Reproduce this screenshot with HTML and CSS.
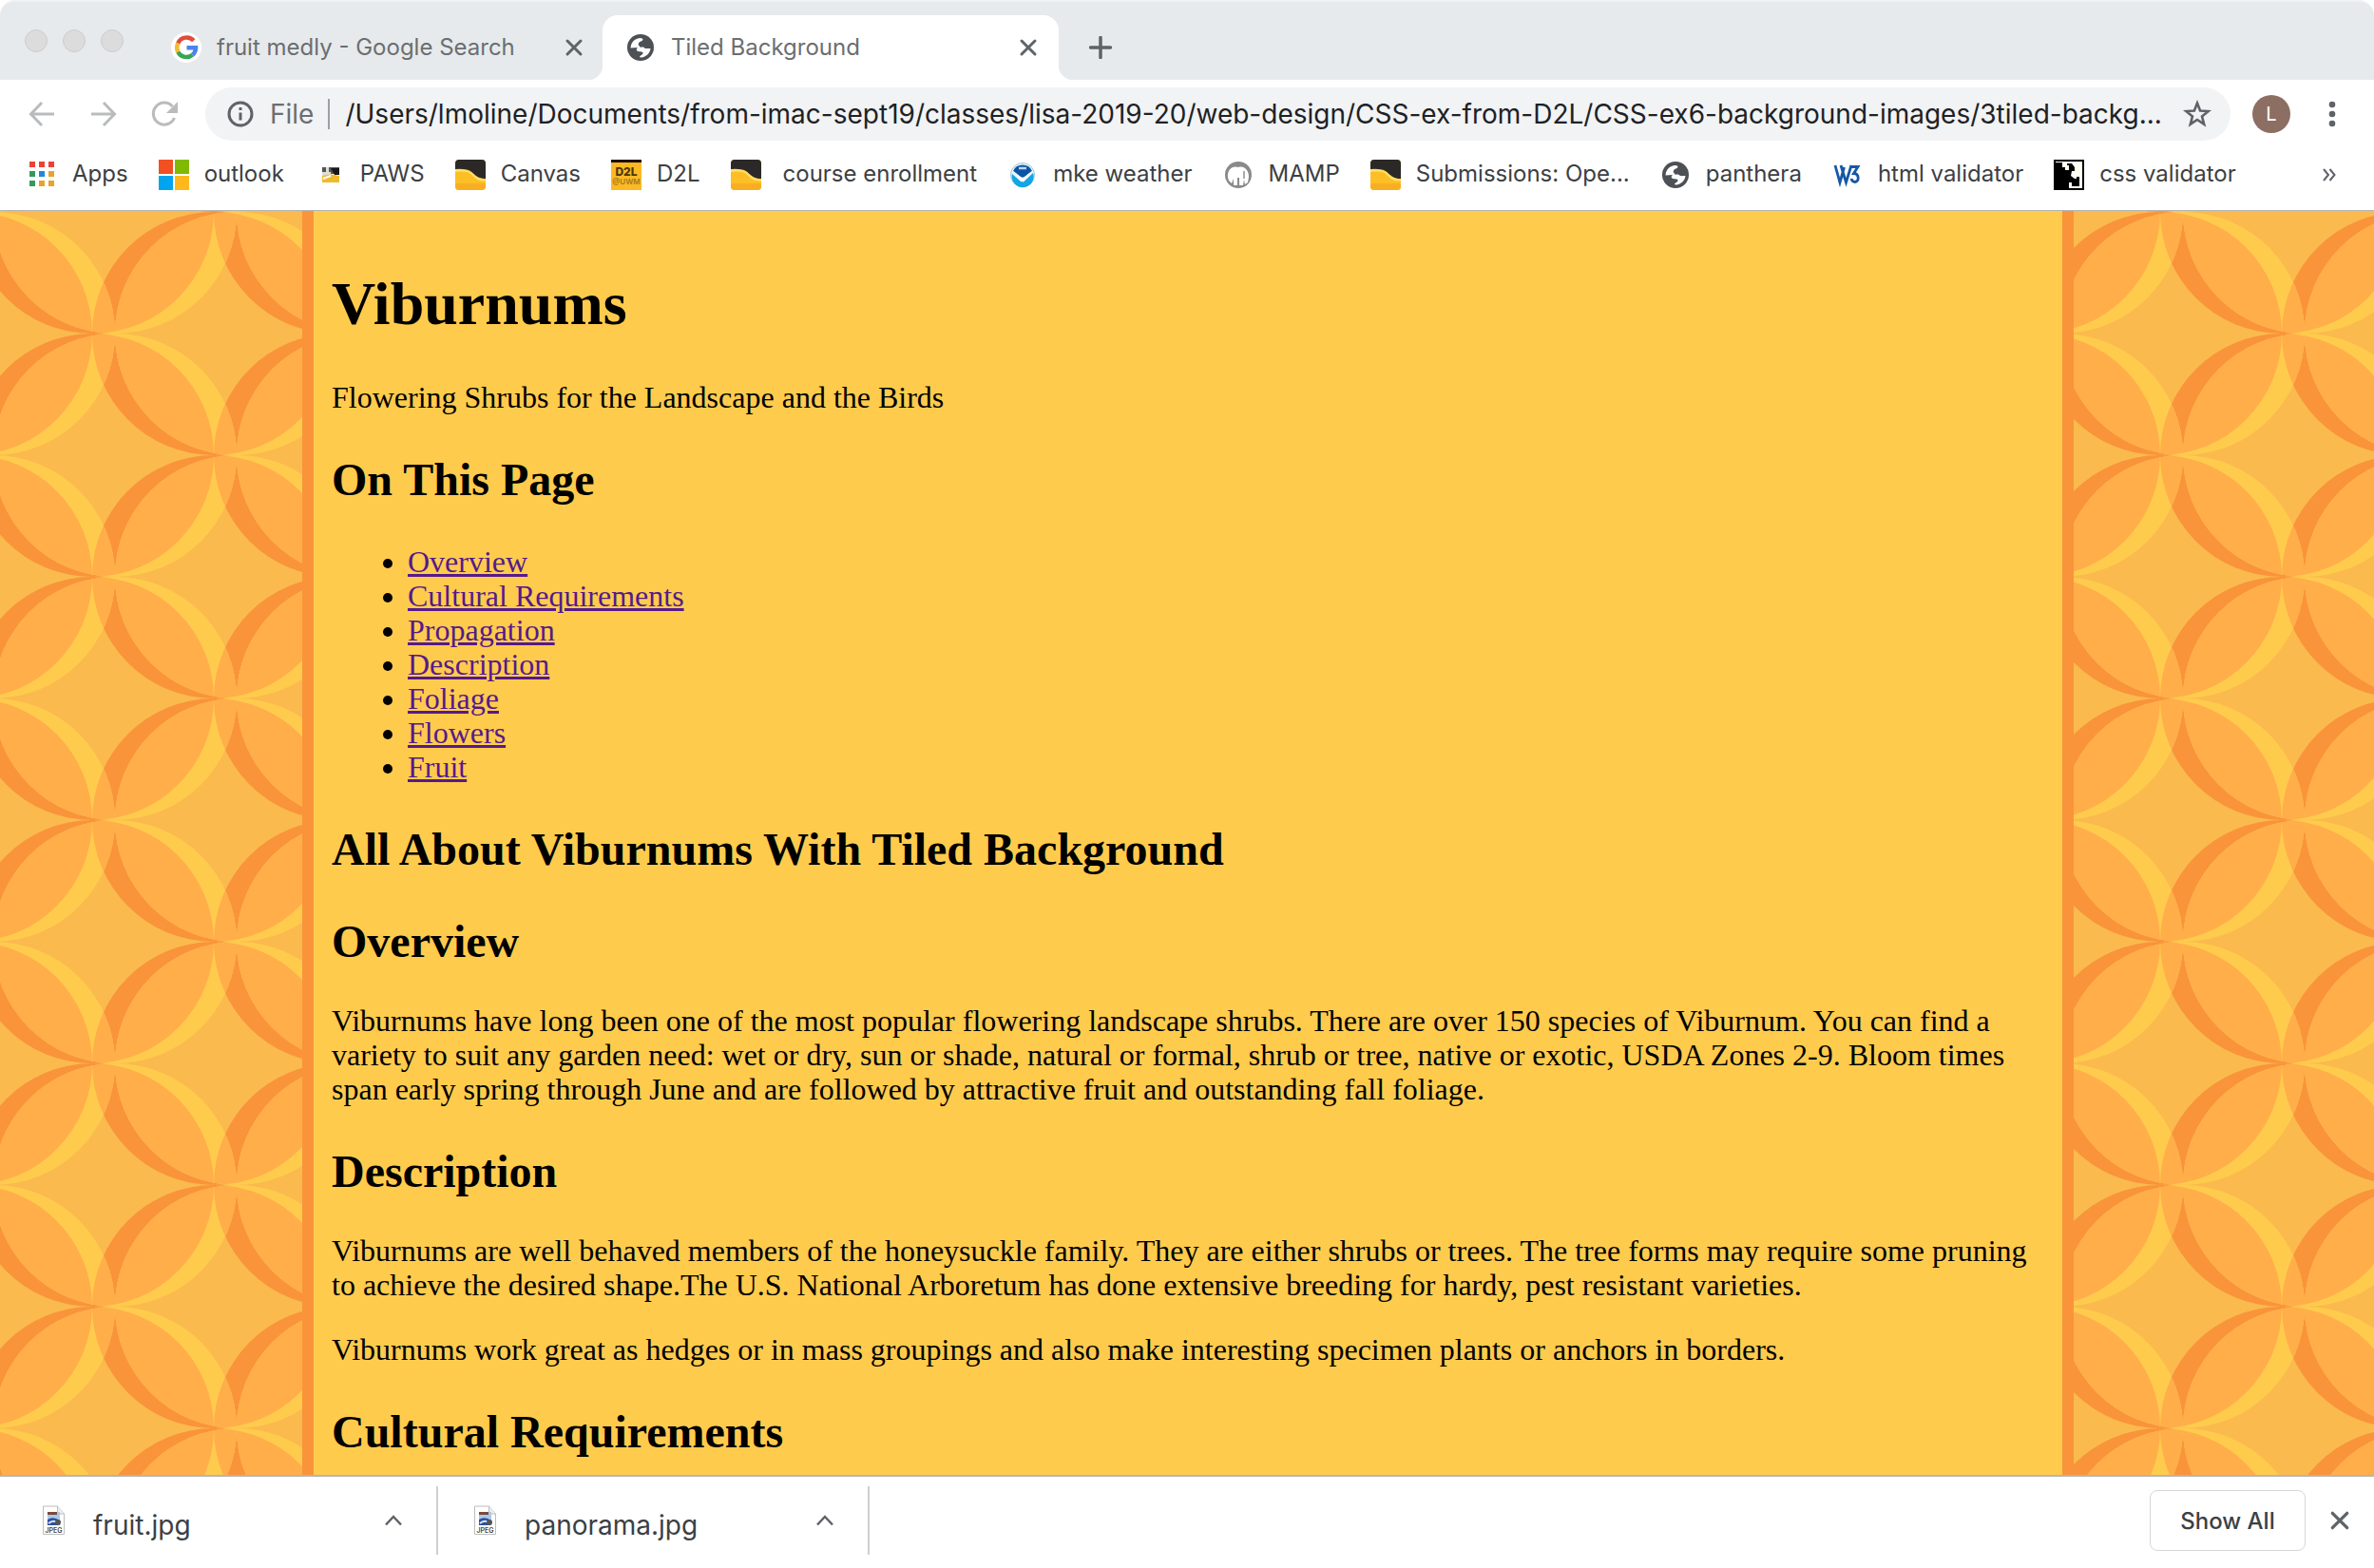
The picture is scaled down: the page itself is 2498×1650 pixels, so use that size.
FILE: index.html
```html
<!DOCTYPE html>
<html lang="en">
<head>
<meta charset="utf-8">
<title>Tiled Background</title>
<link rel="stylesheet" href="styles.css">
</head>
<body>
<svg class="defs" width="0" height="0" aria-hidden="true">
  <defs>
    <symbol id="globe" viewBox="0 0 28 28">
      <circle cx="14" cy="14" r="14" fill="#4d5156"/>
      <path d="M3.500 14.500C4 8 8 4.500 14 4c3 .5 3 2 1.500 3-3.500 1-4 3-3.500 4.500l2 2.500c2-1 4 0 5 1h5.500c-.5 5-4.500 9-10 9.500-1.500 0-2-1-.5-2 3-1.500 3.500-3.500 1-4l-4-.5c-2-1-1.500-3 0-4z" fill="#fff"/>
    </symbol>
    <symbol id="cross" viewBox="0 0 20 20">
      <path d="M3 3l14 14M17 3L3 17" fill="none" stroke="currentColor" stroke-width="3" stroke-linecap="round"/>
    </symbol>
    <symbol id="wave" viewBox="0 0 32 32">
      <rect width="32" height="32" rx="4" fill="#fdbf26"/>
      <path d="M0 25h32v3a4 4 0 0 1-4 4H4a4 4 0 0 1-4-4z" fill="#f9ae22"/>
      <path d="M0 10V4a4 4 0 0 1 4-4h24a4 4 0 0 1 4 4v16c-12 0-12-8-20-9.500Q7 9.500 0 10z" fill="#2b2928"/>
      <path d="M0 10q7-.5 12 1c8 2 8 9 20 9.500v2c-12 1-13-8-20-9.500Q6 12 0 13z" fill="#ffdf6a"/>
    </symbol>
    <symbol id="jpeg" viewBox="0 0 26 32">
      <path d="M1.500 1h15l7 8v21.500h-22z" fill="#fff" stroke="#bdbdbd"/>
      <path d="M16.500 1v8h7" fill="#eee" stroke="#bdbdbd"/>
      <rect x="6" y="7" width="13" height="14" fill="#a9c8ee"/>
      <path d="M6 7h10v3H6z" fill="#7d4a35"/>
      <path d="M6 15q6-4 13 1v5H6z" fill="#2c4f9e"/>
      <path d="M7 19q6-5 12 1" fill="none" stroke="#dde6f5" stroke-width="2"/>
      <circle cx="17" cy="18" r="3" fill="#555"/>
      <text x="12.500" y="29" text-anchor="middle" font-size="7" font-weight="600" font-family="Inter, sans-serif" fill="#444">JPEG</text>
    </symbol>
    <g id="petals">
      <path d="M128 0A128 128 0 0 1 0 128A128 128 0 0 1 128 0z"/>
      <path d="M128 0A128 128 0 0 0 256 128A128 128 0 0 0 128 0z"/>
      <path d="M0 128A128 128 0 0 1 128 256A128 128 0 0 1 0 128z"/>
      <path d="M256 128A128 128 0 0 0 128 256A128 128 0 0 0 256 128z"/>
    </g>
    <clipPath id="petal-clip">
      <path d="M128 0A128 128 0 0 1 0 128A128 128 0 0 1 128 0zM128 0A128 128 0 0 0 256 128A128 128 0 0 0 128 0zM0 128A128 128 0 0 1 128 256A128 128 0 0 1 0 128zM256 128A128 128 0 0 0 128 256A128 128 0 0 0 256 128z"/>
    </clipPath>
    <pattern id="tile" x="-31" y="-127" width="256" height="256" patternUnits="userSpaceOnUse">
      <rect width="256" height="256" fill="#fbba4d"/>
      <use href="#petals" fill="#f9943b"/>
      <g fill="#ffcb4d"><use href="#petals" x="24"/><use href="#petals" x="-232"/></g>
      <g fill="#ffae4a" clip-path="url(#petal-clip)"><use href="#petals" x="24"/><use href="#petals" x="-232"/></g>
    </pattern>
  </defs>
</svg>

<header class="browser">
  <div class="tabstrip">
    <div class="lights"><span></span><span></span><span></span></div>
    <div class="tab">
      <svg class="favicon" viewBox="0 0 32 32" aria-hidden="true">
        <circle cx="16" cy="16" r="16" fill="#fff"/>
        <g fill="none" stroke-width="4.500">
          <path d="M23.800 8.700A10 10 0 0 0 7.300 11.500" stroke="#e14b3c"/>
          <path d="M7.300 11.500a10 10 0 0 0 0 9.200" stroke="#f6bb2a"/>
          <path d="M7.300 20.700A10 10 0 0 0 22.500 23.800" stroke="#36a655"/>
          <path d="M22.500 23.800A10 10 0 0 0 26 16.200H16.500" stroke="#4a83ec"/>
        </g>
      </svg>
      <span class="tab-title">fruit medly - Google Search</span>
      <button class="icon-btn" aria-label="Close tab"><svg width="20" height="20"><use href="#cross"/></svg></button>
    </div>
    <div class="tab active">
      <svg class="favicon globe" aria-hidden="true"><use href="#globe"/></svg>
      <span class="tab-title">Tiled Background</span>
      <button class="icon-btn" aria-label="Close tab"><svg width="20" height="20"><use href="#cross"/></svg></button>
    </div>
    <button class="icon-btn new-tab" aria-label="New tab"><svg width="24" height="24" viewBox="0 0 24 24"><path d="M12 1.500v21M1.500 12h21" stroke="currentColor" stroke-width="3.500" stroke-linecap="round"/></svg></button>
  </div>

  <div class="toolbar">
    <div class="nav">
      <button class="icon-btn" aria-label="Back"><svg width="32" height="32" viewBox="0 0 32 32"><path d="M29 16H5M16 4L4.500 16 16 28" fill="none" stroke="currentColor" stroke-width="3"/></svg></button>
      <button class="icon-btn" aria-label="Forward"><svg width="32" height="32" viewBox="0 0 32 32"><path d="M3 16h24M16 4l11.500 12L16 28" fill="none" stroke="currentColor" stroke-width="3"/></svg></button>
      <button class="icon-btn" aria-label="Reload"><svg width="32" height="32" viewBox="0 0 32 32"><path d="M25.500 20A11.500 11.500 0 1 1 23.500 8" fill="none" stroke="currentColor" stroke-width="3"/><path d="M29 3v12H17z" fill="currentColor"/></svg></button>
    </div>
    <div class="omnibox">
      <svg width="28" height="28" viewBox="0 0 28 28" aria-hidden="true"><circle cx="14" cy="14" r="12" fill="none" stroke="#5f6368" stroke-width="3"/><path d="M14 12.500v8M14 7v3" stroke="#5f6368" stroke-width="3"/></svg>
      <span class="scheme">File</span>
      <input class="url" aria-label="Address" value="/Users/lmoline/Documents/from-imac-sept19/classes/lisa-2019-20/web-design/CSS-ex-from-D2L/CSS-ex6-background-images/3tiled-backg...">
      <button class="icon-btn" aria-label="Bookmark this page"><svg width="30" height="30" viewBox="0 0 30 30"><path d="M15 3.500l3.100 8 8.600.5-6.700 5.400 2.200 8.300L15 21l-7.200 4.700L10 17.400 3.300 12l8.600-.5z" fill="none" stroke="#5f6368" stroke-width="2.600"/></svg></button>
    </div>
    <button class="avatar" aria-label="Profile">L</button>
    <button class="icon-btn menu" aria-label="Menu"><svg width="8" height="28" viewBox="0 0 8 28" fill="#5f6368"><circle cx="4" cy="4" r="3.300"/><circle cx="4" cy="14" r="3.300"/><circle cx="4" cy="24" r="3.300"/></svg></button>
  </div>

  <nav class="bookmarks" aria-label="Bookmarks">
    <a href="#"><svg viewBox="0 0 32 32"><g fill="#ea4335"><path d="M3 2h6v6H3zM13 2h6v6h-6zM23 2h6v6h-6z"/></g><g fill="#349a5c"><path d="M3 12h6v6H3zM3 22h6v6H3z"/></g><path d="M13 12h6v6h-6z" fill="#1e88e5"/><path d="M23 12h6v6h-6zM13 22h6v6h-6zM23 22h6v6h-6z" fill="#e8a32c"/></svg>Apps</a>
    <a href="#"><svg viewBox="0 0 32 32"><path d="M0 0h15v15H0z" fill="#f25022"/><path d="M17 0h15v15H17z" fill="#7fba00"/><path d="M0 17h15v15H0z" fill="#00a4ef"/><path d="M17 17h15v15H17z" fill="#ffb81c"/></svg>outlook</a>
    <a href="#"><svg viewBox="0 0 32 32"><path d="M8 8h18v7H8z" fill="#555"/><path d="M12 8h3v5h-3zM8 13h9v4H8z" fill="#ddd"/><path d="M17 9h9v7h-5z" fill="#171717"/><path d="M8 17q9-3 18 0v7H8z" fill="#f0bb2b"/><path d="M9 20l8-3" stroke="#fff" stroke-width="2"/></svg>PAWS</a>
    <a href="#"><svg><use href="#wave"/></svg>Canvas</a>
    <a href="#"><svg viewBox="0 0 32 32"><path d="M0 0h32v32H0z" fill="#fdb924"/><path d="M0 0h32v3H0z" fill="#1a1200"/><text x="16" y="17" text-anchor="middle" font-size="12" font-weight="800" fill="#4b370b">D2L</text><text x="16" y="26" text-anchor="middle" font-size="8" font-weight="600" fill="#a4781c">@UWM</text></svg>D2L</a>
    <a href="#" class="wide"><svg><use href="#wave"/></svg>course enrollment</a>
    <a href="#"><svg viewBox="0 0 32 32"><circle cx="16" cy="16" r="12.500" fill="#e8f5fc" stroke="#9fc4de"/><path d="M6 12a11 11 0 0 1 20 0l-10 8z" fill="#0b55a5"/><path d="M5 15l9 8 3 .5L27 14A11.500 11.500 0 1 1 5 15z" fill="#14a5e3"/><path d="M5 11l9 10.500q2 1 4 0L27 11l-9 7q-2 1.500-4 0z" fill="#fff"/><path d="M12 9h8" stroke="#b9d4ee" stroke-width="2.500"/></svg>mke weather</a>
    <a href="#"><svg viewBox="0 0 32 32"><circle cx="16" cy="16" r="14" fill="#8a8a8a"/><path d="M5 19C4 10 10 6 16 8c6-2 11 3 11 10l-1 6-3 2-1-5-1 6h-4v-8h-2v8h-4v-7l-2 5-3-3z" fill="#fff"/><path d="M22 12v8" stroke="#aaa" stroke-width="2"/></svg>MAMP</a>
    <a href="#"><svg><use href="#wave"/></svg>Submissions: Ope...</a>
    <a href="#"><svg viewBox="0 0 32 32"><use href="#globe" x="2" y="2" width="28" height="28"/></svg>panthera</a>
    <a href="#"><svg viewBox="0 0 32 32"><g fill="none" stroke="#1558a6" stroke-width="2.800"><path d="M3 6l5 18 4.500-16M9 6l5.500 18L20 6"/><path d="M19 7.500h8l-4.500 7c6 0 6 9 1.500 9-2.500 0-3.500-1.500-4-3.500"/></g></svg>html validator</a>
    <a href="#"><svg viewBox="0 0 32 32"><path d="M1 1h30v30H1z" fill="#fffff4" stroke="#000" stroke-width="2"/><path d="M2 3h7v5h3v3h4V6h-2V4h5l3 4v4h-3l-1 5 4 3h2v-2h3v10h-8v-4h-3v6H2z" fill="#000"/></svg>css validator</a>
    <button class="icon-btn more" aria-label="More bookmarks"><svg width="14" height="14" viewBox="0 0 14 14"><path d="M1 1l5 6-5 6M7.500 1l5 6-5 6" fill="none" stroke="#5f6368" stroke-width="2"/></svg></button>
  </nav>
</header>

<main class="viewport">
  <svg class="tiles" width="100%" height="100%" aria-hidden="true"><rect width="100%" height="100%" fill="url(#tile)"/></svg>
  <article class="page">
    <h1>Viburnums</h1>
    <p>Flowering Shrubs for the Landscape and the Birds</p>
    <h2>On This Page</h2>
    <ul>
      <li><a href="#overview">Overview</a></li>
      <li><a href="#cultural">Cultural Requirements</a></li>
      <li><a href="#propagation">Propagation</a></li>
      <li><a href="#description">Description</a></li>
      <li><a href="#foliage">Foliage</a></li>
      <li><a href="#flowers">Flowers</a></li>
      <li><a href="#fruit">Fruit</a></li>
    </ul>
    <h2>All About Viburnums With Tiled Background</h2>
    <h2 id="overview">Overview</h2>
    <p>Viburnums have long been one of the most popular flowering landscape shrubs. There are over 150 species of Viburnum. You can find a variety to suit any garden need: wet or dry, sun or shade, natural or formal, shrub or tree, native or exotic, USDA Zones 2-9. Bloom times span early spring through June and are followed by attractive fruit and outstanding fall foliage.</p>
    <h2 id="description">Description</h2>
    <p>Viburnums are well behaved members of the honeysuckle family. They are either shrubs or trees. The tree forms may require some pruning to achieve the desired shape.The U.S. National Arboretum has done extensive breeding for hardy, pest resistant varieties.</p>
    <p>Viburnums work great as hedges or in mass groupings and also make interesting specimen plants or anchors in borders.</p>
    <h2 id="cultural">Cultural Requirements</h2>
  </article>
</main>

<footer class="downloads">
  <div class="download">
    <svg class="file" aria-hidden="true"><use href="#jpeg"/></svg>
    <span class="name">fruit.jpg</span>
    <button class="icon-btn" aria-label="Options for fruit.jpg"><svg width="20" height="12" viewBox="0 0 20 12"><path d="M2 10.500l8-8.500 8 8.500" fill="none" stroke="currentColor" stroke-width="2.500"/></svg></button>
  </div>
  <div class="download">
    <svg class="file" aria-hidden="true"><use href="#jpeg"/></svg>
    <span class="name">panorama.jpg</span>
    <button class="icon-btn" aria-label="Options for panorama.jpg"><svg width="20" height="12" viewBox="0 0 20 12"><path d="M2 10.500l8-8.500 8 8.500" fill="none" stroke="currentColor" stroke-width="2.500"/></svg></button>
  </div>
  <button class="show-all">Show All</button>
  <button class="icon-btn" aria-label="Close downloads bar"><svg width="22" height="22"><use href="#cross"/></svg></button>
</footer>
</body>
</html>
```
FILE: styles.css
```css
* {
  box-sizing: border-box;
}

body {
  margin: 0;
  height: 100vh;
  display: flex;
  flex-direction: column;
  background: #fff;
  font-family: Inter, sans-serif;
  font-size: 24px;
  color: #3c4043;
}

.defs {
  position: absolute;
}

.icon-btn {
  display: flex;
  align-items: center;
  justify-content: center;
  padding: 0;
  border: 0;
  background: none;
  color: #5f6368;
}

/* Tab strip */
.browser {
  flex: none;
  border-bottom: 1px solid #b4b4b4;
}

.tabstrip {
  display: flex;
  height: 84px;
  padding: 14px 16px 0 26px;
  background: #e6eaec;
  border-top: 2px solid #eff1f2;
  border-radius: 16px 16px 0 0;
}

.lights {
  display: flex;
  gap: 16px;
  padding-top: 15px;
  width: 138px;
}

.lights span {
  width: 24px;
  height: 24px;
  border: 1px solid #cdcdcd;
  border-radius: 50%;
  background: #dcdcdc;
}

.tab {
  display: flex;
  align-items: center;
  width: 470px;
  height: 68px;
  padding: 0 20px 0 16px;
  color: #6b6e71;
}

.tab.active {
  position: relative;
  width: 480px;
  padding: 0 22px 0 26px;
  background: #fff;
  border-radius: 16px 16px 0 0;
}

/* The flared feet of the active tab */
.tab.active::before,
.tab.active::after {
  content: "";
  position: absolute;
  bottom: 0;
  width: 16px;
  height: 16px;
}

.tab.active::before {
  right: 100%;
  background: radial-gradient(circle at 0 0, #e6eaec 16px, #fff 17px);
}

.tab.active::after {
  left: 100%;
  background: radial-gradient(circle at 100% 0, #e6eaec 16px, #fff 17px);
}

.favicon {
  flex: none;
  width: 32px;
  height: 32px;
  margin-right: 16px;
}

.favicon.globe {
  width: 28px;
  height: 28px;
  margin-right: 18px;
}

.tab-title {
  flex: 1;
  padding-bottom: 2px;
  white-space: nowrap;
}

.new-tab {
  width: 56px;
  height: 68px;
  margin-left: 16px;
}

/* Toolbar */
.toolbar {
  display: flex;
  align-items: center;
  height: 72px;
  padding: 0 40px 0 28px;
}

.nav {
  display: flex;
  gap: 33px;
  width: 188px;
}

.nav .icon-btn {
  color: #b9bbbd;
}

.omnibox {
  flex: 1;
  display: flex;
  align-items: center;
  height: 56px;
  padding: 0 20px 0 23px;
  border-radius: 28px;
  background: #f1f3f4;
  font-size: 28px;
}

.scheme {
  margin-left: 17px;
  padding-right: 15px;
  border-right: 2px solid #9aa0a6;
  line-height: 32px;
  color: #6b6f73;
}

.url {
  flex: 1;
  min-width: 0;
  margin: 0 20px 0 16px;
  padding: 0;
  border: 0;
  outline: 0;
  background: none;
  font: inherit;
  color: #202124;
  text-overflow: ellipsis;
}

.avatar {
  width: 40px;
  height: 40px;
  margin: 0 40px 0 23px;
  padding: 0;
  border: 0;
  border-radius: 50%;
  background: #8d6e63;
  color: #fff;
  font: 20px Inter, sans-serif;
}

/* Bookmarks */
.bookmarks {
  display: flex;
  align-items: center;
  gap: 32px;
  height: 65px;
  padding: 0 40px 9px 28px;
}

.bookmarks a {
  display: flex;
  align-items: flex-start;
  gap: 16px;
  height: 32px;
  line-height: 30px;
  color: inherit;
  text-decoration: none;
  white-space: nowrap;
}

.bookmarks a.wide {
  gap: 23px;
}

.bookmarks a svg {
  flex: none;
  width: 32px;
  height: 32px;
}

.more {
  margin-left: auto;
}

/* Page */
.viewport {
  flex: 1;
  min-height: 0;
  position: relative;
  overflow: hidden;
}

.tiles {
  position: absolute;
  inset: 0;
}

.page {
  position: relative;
  min-height: 100%;
  margin: 0 316px 0 318px;
  padding: 18px 18px 18px 19px;
  border: solid #f9943b;
  border-width: 0 12px;
  background: #ffcb4d;
  font: 32px/36px "Liberation Serif", serif;
  color: #000;
}

.page h1 {
  margin: 43px 0;
  font-size: 64px;
  line-height: 74px;
}

.page h2 {
  margin: 39px 0 37px;
  padding-top: 2px;
  font-size: 48px;
  line-height: 56px;
}

.page p {
  margin: 32px 0;
}

.page ul {
  margin: 40px 0 32px;
  padding-left: 80px;
}

.page a {
  color: #551a8b;
}

/* Downloads */
.downloads {
  flex: none;
  display: flex;
  align-items: center;
  height: 98px;
  padding: 0 25px 4px 0;
  border-top: 2px solid #b5b5b5;
  background: #fff;
}

.download {
  display: flex;
  align-items: center;
  width: 454px;
  height: 72px;
  padding: 0 35px 0 37px;
  border-right: 2px solid #cfcfcf;
}

.download:first-child {
  width: 461px;
  padding-left: 44px;
}

.file {
  width: 26px;
  height: 32px;
  margin-right: 28px;
}

.name {
  flex: 1;
  padding-top: 10px;
  font-size: 28px;
}

.show-all {
  width: 164px;
  height: 64px;
  margin: 0 25px 0 auto;
  border: 1px solid #d5d7da;
  border-radius: 8px;
  background: #fff;
  font: 500 24px Inter, sans-serif;
  color: #3c4043;
}
```
